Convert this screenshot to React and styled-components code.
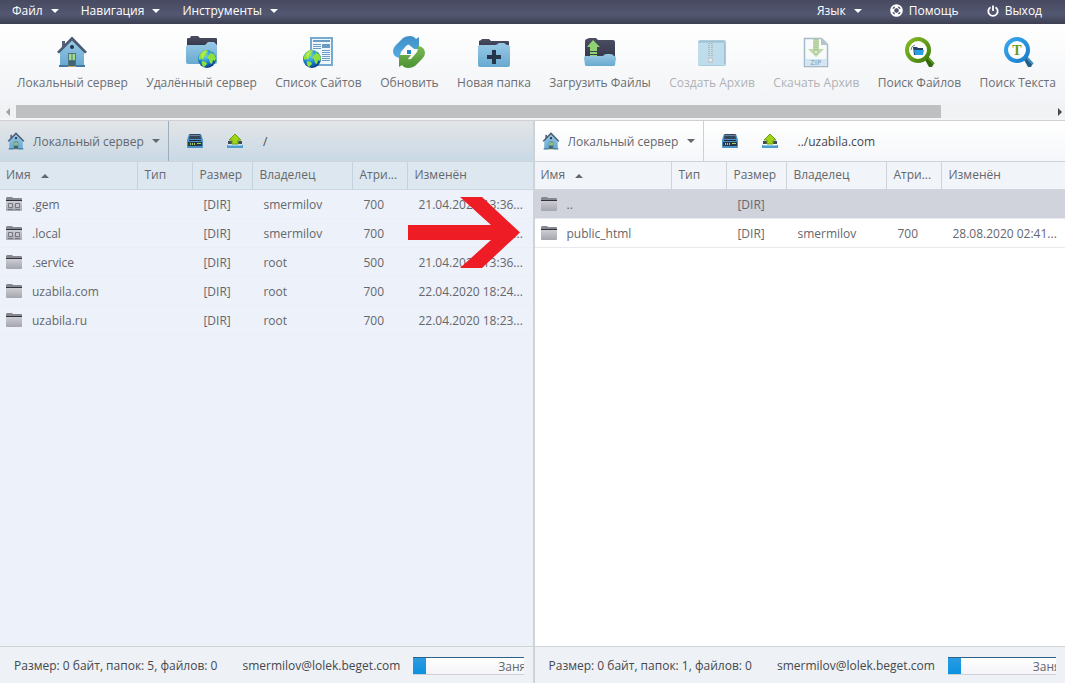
import styled, { createGlobalStyle } from "styled-components";

const menus = ["Файл", "Навигация", "Инструменты"];

const tools = [
  { label: "Локальный сервер", Icon: HomeIcon },
  { label: "Удалённый сервер", Icon: RemoteIcon },
  { label: "Список Сайтов", Icon: SitesIcon },
  { label: "Обновить", Icon: RefreshIcon },
  { label: "Новая папка", Icon: NewFolderIcon },
  { label: "Загрузить Файлы", Icon: UploadIcon },
  { label: "Создать Архив", Icon: ArchiveIcon, disabled: true },
  { label: "Скачать Архив", Icon: ZipIcon, disabled: true },
  { label: "Поиск Файлов", Icon: SearchFilesIcon },
  { label: "Поиск Текста", Icon: SearchTextIcon },
];

const columns = ["Имя", "Тип", "Размер", "Владелец", "Атрибуты", "Изменён"];

const leftFiles = [
  { name: ".gem", owner: "smermilov", attrs: "700", changed: "21.04.2020 13:36:12", hidden: true },
  { name: ".local", owner: "smermilov", attrs: "700", changed: "21.04.2020 13:36:12", hidden: true },
  { name: ".service", owner: "root", attrs: "500", changed: "21.04.2020 13:36:12" },
  { name: "uzabila.com", owner: "root", attrs: "700", changed: "22.04.2020 18:24:10" },
  { name: "uzabila.ru", owner: "root", attrs: "700", changed: "22.04.2020 18:23:10" },
];

const rightFiles = [
  { name: "..", owner: "", attrs: "", changed: "", selected: true },
  { name: "public_html", owner: "smermilov", attrs: "700", changed: "28.08.2020 02:41:10" },
];

export default function App() {
  return (
    <>
      <GlobalStyle />
      <Gradients />
      <Page>
        <MenuBar>
          <MenuGroup>
            {menus.map(menu => (
              <MenuButton key={menu} type="button">
                {menu}
                <Caret />
              </MenuButton>
            ))}
          </MenuGroup>
          <MenuGroup>
            <MenuButton type="button">
              Язык
              <Caret />
            </MenuButton>
            <MenuLink href="#help">
              <HelpIcon />
              Помощь
            </MenuLink>
            <MenuLink href="#logout">
              <PowerIcon />
              Выход
            </MenuLink>
          </MenuGroup>
        </MenuBar>
        <Toolbar>
          {tools.map(({ label, Icon, disabled }) => (
            <ToolButton key={label} type="button" disabled={disabled}>
              <Icon />
              {label}
            </ToolButton>
          ))}
        </Toolbar>
        <ScrollBar>
          <ScrollButton type="button" aria-label="Прокрутить влево" disabled>
            <svg width="4" height="8" viewBox="0 0 4 8">
              <path d="M4 0v8L0 4z" fill="#a0a0a0" />
            </svg>
          </ScrollButton>
          <ScrollTrack>
            <ScrollThumb />
          </ScrollTrack>
          <ScrollButton type="button" aria-label="Прокрутить вправо">
            <svg width="4" height="8" viewBox="0 0 4 8">
              <path d="M0 0v8l4-4z" fill="#484848" />
            </svg>
          </ScrollButton>
        </ScrollBar>
        <Panels>
          <FilePanel active id="left" path="/" files={leftFiles} summary="Размер: 0 байт, папок: 5, файлов: 0" />
          <FilePanel id="right" path="../uzabila.com" files={rightFiles} summary="Размер: 0 байт, папок: 1, файлов: 0" />
          <Pointer width="112" height="71" viewBox="0 0 112 71" aria-hidden="true">
            <path d="M52 0h22l38 35.500L74 71H52l31-28H0V28h83z" fill="#ee1c25" />
          </Pointer>
        </Panels>
      </Page>
    </>
  );
}

function FilePanel({ active, id, path, files, summary }) {
  return (
    <Panel $active={active}>
      <PathBar $active={active}>
        <ServerLabel htmlFor={`${id}-server`} $active={active}>
          <HomeIcon size={18} />
          <ServerSelect id={`${id}-server`} aria-label="Сервер">
            <option>Локальный сервер</option>
          </ServerSelect>
          <Caret />
        </ServerLabel>
        <PathButton type="button" aria-label="Диски">
          <DriveIcon />
        </PathButton>
        <PathButton type="button" aria-label="На уровень вверх">
          <LevelUpIcon />
        </PathButton>
        <PathInput aria-label="Путь" defaultValue={path} />
      </PathBar>
      <Files>
        <Table>
          <colgroup>
            <NameCol />
            <Col $width={55} />
            <Col $width={60} />
            <Col $width={100} />
            <Col $width={55} />
            <col />
          </colgroup>
          <thead>
            <tr>
              {columns.map((column, i) => (
                <HeadCell key={column} $active={active}>
                  {column === "Атрибуты" ? "Атри..." : column}
                  {i === 0 && <SortMark />}
                </HeadCell>
              ))}
            </tr>
          </thead>
          <tbody>
            {files.map(file => (
              <Row key={file.name} $selected={file.selected} $active={active}>
                <Cell>
                  <FileName>
                    <FolderIcon hidden={file.hidden} />
                    {file.name}
                  </FileName>
                </Cell>
                <Cell />
                <Cell>[DIR]</Cell>
                <Cell>{file.owner}</Cell>
                <Cell>{file.attrs}</Cell>
                <Cell>{file.changed && `${file.changed.slice(0, -3)}...`}</Cell>
              </Row>
            ))}
          </tbody>
        </Table>
      </Files>
      <StatusBar>
        <span>{summary}</span>
        <span>smermilov@lolek.beget.com</span>
        <Quota>
          <QuotaFill />
          <QuotaText>Заня</QuotaText>
        </Quota>
      </StatusBar>
    </Panel>
  );
}

function Caret() {
  return (
    <svg width="8" height="4" viewBox="0 0 8 4" aria-hidden="true">
      <path d="M0 0h8L4 4z" fill="currentColor" />
    </svg>
  );
}

function SortMark() {
  return (
    <SortSvg width="8" height="4" viewBox="0 0 8 4" aria-hidden="true">
      <path d="M0 4h8L4 0z" fill="currentColor" />
    </SortSvg>
  );
}

function Gradients() {
  return (
    <HiddenSvg width="0" height="0" aria-hidden="true">
      <linearGradient id="blue" x1="0" y1="0" x2="0" y2="1">
        <stop offset="0" stopColor="#99c9e6" />
        <stop offset="1" stopColor="#68a9d0" />
      </linearGradient>
      <linearGradient id="dark" x1="0" y1="0" x2="0" y2="1">
        <stop offset="0" stopColor="#4c4f63" />
        <stop offset="1" stopColor="#2f3244" />
      </linearGradient>
      <linearGradient id="grey" x1="0" y1="0" x2="0" y2="1">
        <stop offset="0" stopColor="#cdcdd3" />
        <stop offset="1" stopColor="#a4a5ae" />
      </linearGradient>
      <radialGradient id="ocean" cx="0.4" cy="0.3" r="0.7">
        <stop offset="0" stopColor="#6fd4fb" />
        <stop offset="0.6" stopColor="#1882d0" />
        <stop offset="1" stopColor="#0b3f88" />
      </radialGradient>
      <linearGradient id="arrowBlue" x1="0" y1="0" x2="0" y2="1">
        <stop offset="0" stopColor="#3f8fc6" />
        <stop offset="1" stopColor="#54ace0" />
      </linearGradient>
      <linearGradient id="arrowGreen" x1="0" y1="0" x2="0" y2="1">
        <stop offset="0" stopColor="#7bbb55" />
        <stop offset="1" stopColor="#4b9232" />
      </linearGradient>
      <linearGradient id="ringGreen" x1="0" y1="0" x2="1" y2="1">
        <stop offset="0" stopColor="#86bc26" />
        <stop offset="1" stopColor="#3f7d0c" />
      </linearGradient>
      <linearGradient id="ringBlue" x1="0" y1="0" x2="1" y2="1">
        <stop offset="0" stopColor="#38a8ee" />
        <stop offset="1" stopColor="#1a7dcc" />
      </linearGradient>
    </HiddenSvg>
  );
}

function HomeIcon({ size = 32 }) {
  return (
    <svg width={size} height={size} viewBox="0 0 32 32" aria-hidden="true">
      <path d="M6 5h3v8H6z" fill="#56657a" />
      <path d="M4 14 16 3l12 11v16H4z" fill="url(#blue)" />
      <path d="M1 16 16 0.500 31 16l-2 1.500L16 4.500 3 17.500z" fill="#4b5a73" />
      <circle cx="16" cy="11" r="2" fill="#25364c" />
      <path d="M12 17h8v13h-8z" fill="#4d7482" />
      <path d="M13 18h2.500v6H13zM16.500 18H19v6h-2.500z" fill="#a4dc84" />
      <path d="M13 25h6v5h-6z" fill="#426371" />
      <path d="M3 29h9v2H3zM20 29h9v2h-9z" fill="#437ba0" />
      <path d="M12 30h8v1h-8z" fill="#bda66d" />
    </svg>
  );
}

function Globe({ x, y }) {
  return (
    <g transform={`translate(${x} ${y})`}>
      <circle cx="9" cy="9" r="9" fill="url(#ocean)" />
      <path
        d="M2 4Q5 0 9 0l1 2-2 1 1 2-3 2-1 3-2-1-2 1Q0 7 2 4zM10 6l3-3 3 1 2 4-1 3-2-1-1 4-2-1-1-4-2-1zM4 11l4 1 1 2-3 3q-3-2-2-6zM12 1l2 1-1 1z"
        fill="#8ee03c"
      />
      <path d="M3 5q2-4 6-4l-3 4-1 4z" fill="#bdf15c" opacity="0.8" />
    </g>
  );
}

function RemoteIcon() {
  return (
    <svg width="34" height="32" viewBox="0 0 34 32" aria-hidden="true">
      <path d="M2 12V3q0-1 1-1h2l1-2h7l2 2h16q1 0 1 1v9z" fill="url(#dark)" />
      <path d="M1 11q0-2 2-2h17l3-3h6l3 3v17q0 2-2 2H3q-2 0-2-2z" fill="url(#blue)" />
      <Globe x={13} y={14} />
    </svg>
  );
}

function SitesIcon() {
  return (
    <svg width="32" height="32" viewBox="0 0 32 32" aria-hidden="true">
      <path d="M8 1h23v29H8z" fill="#76a9d0" />
      <path d="M10 3h19v25H10z" fill="#edf7fc" />
      <path
        d="M11 4h17v2H11zM11 8h8v1h-8zM11 10h8v1h-8zM11 12h8v1h-8zM20 8h8v4h-8zM20 14h8v1h-8zM20 16h8v1h-8zM20 18h8v1h-8zM20 20h8v1h-8zM20 22h8v1h-8zM20 24h8v1h-8z"
        fill="#6c9cc6"
      />
      <Globe x={1} y={14} />
    </svg>
  );
}

function RefreshIcon() {
  return (
    <svg width="32" height="32" viewBox="0 0 32 32" aria-hidden="true">
      <path
        d="M7 22Q0 21 0 15q0-3 3-6l7-7q3-2 7-2 4 0 6 3l3-2v12H14l3-4q-2-1-4 1l-5 6q-1 2-1 6z"
        fill="url(#arrowBlue)"
      />
      <path
        d="M25 10q7 1 7 7 0 3-3 6l-7 7q-3 2-7 2-4 0-6-3l-3 2V19h12l-3 4q2 1 4-1l5-6q1-2 1-6z"
        fill="url(#arrowGreen)"
      />
      <path d="M16 9l8 6-5 4h-8l-3-3z" fill="#fcfdfe" />
      <path d="M14 14h4v4h-4z" fill="#2585c8" />
    </svg>
  );
}

function NewFolderIcon() {
  return (
    <svg width="32" height="32" viewBox="0 0 32 32" aria-hidden="true">
      <path d="M1 14V5l2-1 1-1h7l2 2h17q1 0 1 1v8z" fill="url(#dark)" />
      <path d="M0 11q0-2 2-2h16l3-2h5l3 2h1q2 0 2 2v18q0 2-2 2H2q-2 0-2-2z" fill="url(#blue)" />
      <path d="M14 14h4v5h5v4h-5v5h-4v-5H9v-4h5z" fill="#25354a" />
    </svg>
  );
}

function UploadIcon() {
  return (
    <svg width="32" height="32" viewBox="0 0 32 32" aria-hidden="true">
      <path d="M1 27V5q0-2 2-2l2-1h7l2 2h15q2 0 2 2v21z" fill="url(#dark)" />
      <path d="M9 4 16 11h-3v4H6v-4H3z" fill="#91d274" />
      <path d="M6 16h7v2H6zM6 19h7v1H6z" fill="#91d274" />
      <path d="M0 22q0-2 2-2h17q1-2 4-2h3q3 0 4 2 2 0 2 2l-1 7q0 1-2 1H3q-2 0-2-1z" fill="url(#blue)" />
    </svg>
  );
}

function ArchiveIcon() {
  return (
    <svg width="28" height="32" viewBox="0 0 28 32" aria-hidden="true">
      <rect y="4" width="28" height="26" rx="2" fill="#5ba2c4" />
      <path d="M0 7h27v21q0 1-1 1H2q-2 0-2-1z" fill="#85c0dc" />
      <path d="M1 5h25v1H1zM26 7h1v21h-1z" fill="#4885ad" />
      <path d="M11 5v17M14 5v17" stroke="#667b86" strokeWidth="2" strokeDasharray="1 1" />
      <path d="M10 21h5v6h-5z" fill="#849ba6" />
      <circle cx="12.500" cy="24" r="1.500" fill="#dde6ed" />
    </svg>
  );
}

function ZipIcon() {
  return (
    <svg width="26" height="32" viewBox="0 0 26 32" aria-hidden="true">
      <path d="M1.500 2.500h17l6 6v22h-23z" fill="#f7fafc" stroke="#547c96" strokeWidth="1.500" />
      <path d="M18 2v7h7z" fill="#718b9c" />
      <path d="M10 3h6v10h5l-8 8-8-8h5z" fill="#83bd4e" />
      <path d="M12 3v12M14 3v12" stroke="#536a53" strokeDasharray="1 1" />
      <circle cx="13" cy="16" r="2" fill="#d4e8bd" stroke="#5e8150" />
      <path d="M2 23h22v7H2z" fill="#add5ed" />
      <ZipGlyph x="13" y="29" textAnchor="middle">ZIP</ZipGlyph>
    </svg>
  );
}

function SearchFilesIcon() {
  return (
    <svg width="32" height="32" viewBox="0 0 32 32" aria-hidden="true">
      <path d="M21 22l3-3 7 8-2 4h-3z" fill="#36660d" />
      <path d="M25 22l6 6" stroke="#589622" strokeWidth="2" />
      <circle cx="15" cy="14" r="11" fill="#fff" stroke="url(#ringGreen)" strokeWidth="4" />
      <path d="M10 11h4l1 1h5v7h-9z" fill="#25445f" />
      <path d="M11 14h10l-1 5h-8z" fill="#289fe6" />
      <path d="M8 14q0-4 4-5" fill="none" stroke="#72848d" />
    </svg>
  );
}

function SearchTextIcon() {
  return (
    <svg width="32" height="32" viewBox="0 0 32 32" aria-hidden="true">
      <path d="M21 22l3-3 7 8-2 4h-3z" fill="#255e86" />
      <path d="M25 22l6 6" stroke="#4794c2" strokeWidth="2" />
      <circle cx="15" cy="14" r="11" fill="#fff" stroke="url(#ringBlue)" strokeWidth="4" />
      <TextGlyph x="15" y="19" textAnchor="middle">T</TextGlyph>
    </svg>
  );
}

function HelpIcon() {
  return (
    <svg width="13" height="13" viewBox="0 0 13 13" aria-hidden="true">
      <circle cx="6.500" cy="6.500" r="5.500" fill="none" stroke="#fff" strokeWidth="1.600" />
      <circle cx="6.500" cy="6.500" r="2.800" fill="none" stroke="#fff" />
      <path d="M4 1h5l-1 3H5zM5 9h3l1 3H4zM1 4l3 1v3L1 9zM12 4v5L9 8V5z" fill="#fff" />
    </svg>
  );
}

function PowerIcon() {
  return (
    <svg width="12" height="12" viewBox="0 0 12 12" aria-hidden="true" fill="none" stroke="#fff" strokeWidth="1.800">
      <path d="M3.500 2.200a4.700 4.700 0 1 0 5 0M6 0.500v5.500" />
    </svg>
  );
}

function DriveIcon() {
  return (
    <svg width="16" height="14" viewBox="0 0 16 14" aria-hidden="true">
      <path d="M2 0h12l2 6v7q0 1-1 1H1q-1 0-1-1V6z" fill="#4b91c5" />
      <path d="M3 0h10l1 5H2z" fill="#35465b" />
      <path d="M3 1h10v1H3z" fill="#6b849c" />
      <path d="M2 6h12v1H2z" fill="#1c2a3a" />
      <path d="M1 8h14v4H1z" fill="#273747" />
      <path d="M3 9h1v2H3zM5 9h1v2H5zM7 9h1v2H7zM10 9h4v1h-4z" fill="#9fd25c" />
    </svg>
  );
}

function LevelUpIcon() {
  return (
    <svg width="16" height="16" viewBox="0 0 16 16" aria-hidden="true">
      <path d="M1 8h14v3H1z" fill="#454b57" />
      <path d="M8 1 14 7h-3v4H5V7H2z" fill="#9dd514" stroke="#6c9f1c" />
      <path d="M0 12h16v3H0z" fill="#4e9dce" />
      <path d="M1 12h14v1H1z" fill="#8bc9e9" />
    </svg>
  );
}

function FolderIcon({ hidden }) {
  return (
    <svg width="16" height="14" viewBox="0 0 16 14" aria-hidden="true">
      <path d="M0 3V1l1-1h5l1 1h8q1 0 1 1v2H0z" fill="#85888f" />
      <path d="M0 3h16v1H0z" fill="#30333b" />
      <path d="M0 4h16v9q0 1-1 1H1q-1 0-1-1z" fill="url(#grey)" />
      {hidden && (
        <path d="M2.500 6.500h4v4h-4zM9.500 6.500h4v4h-4zM2 12.500h5M9 12.500h5" fill="#c6c7cc" stroke="#74777f" />
      )}
    </svg>
  );
}

const GlobalStyle = createGlobalStyle`
  * {
    box-sizing: border-box;
  }
  body {
    margin: 0;
    font-family: "Open Sans", "Noto Sans", sans-serif;
    font-size: 12px;
    color: #64676c;
  }
  button, input, select {
    font: inherit;
    color: inherit;
    border: 0;
    padding: 0;
    background: none;
  }
  svg {
    flex: none;
  }
`;

const Page = styled.div`
  display: flex;
  flex-direction: column;
  height: 100vh;
  overflow: hidden;
  background-color: #f4f5f7;
`;

const HiddenSvg = styled.svg`
  position: absolute;
`;

const MenuBar = styled.nav`
  display: flex;
  justify-content: space-between;
  height: 24px;
  padding: 0 12px;
  background: linear-gradient(#474a60, #535771 60%, #3d4052);
  color: #ffffff;
`;

const MenuGroup = styled.div`
  display: flex;
  align-items: center;
  gap: 22px;
  height: 21px;

  & + & {
    gap: 28px;
    padding-right: 11px;
  }
`;

const MenuButton = styled.button`
  display: flex;
  align-items: center;
  gap: 8px;
`;

const MenuLink = styled.a`
  display: flex;
  align-items: center;
  gap: 6px;
  color: inherit;
  text-decoration: none;
`;

const Toolbar = styled.div`
  display: flex;
  flex: none;
  justify-content: space-between;
  height: 81px;
  padding-left: 8px;
  overflow: hidden;
  background: linear-gradient(#ffffff, #f1f3f6);
`;

const ToolButton = styled.button`
  display: flex;
  flex: none;
  flex-direction: column;
  align-items: center;
  gap: 6px;
  padding: 12px 9px 0;
  line-height: 18px;
  white-space: nowrap;
  color: #6b6e73;

  &:disabled {
    opacity: 0.5;
  }
`;

const TextGlyph = styled.text`
  font-family: "Liberation Serif", serif;
  font-size: 14px;
  font-weight: 700;
  fill: #5f9c20;
`;

const ZipGlyph = styled.text`
  font-size: 7px;
  font-weight: 700;
  fill: #426983;
`;

const ScrollBar = styled.div`
  display: flex;
  flex: none;
  height: 13px;
  background-color: #f1f2f4;
`;

const ScrollButton = styled.button`
  display: flex;
  flex: none;
  align-items: center;
  justify-content: center;
  width: 16px;

  &:last-child {
    width: 10px;
  }
`;

const ScrollTrack = styled.div`
  flex: 1;
`;

const ScrollThumb = styled.div`
  width: 89%;
  height: 100%;
  background-color: #bfc0c2;
`;

const Panels = styled.main`
  position: relative;
  display: flex;
  flex: 1;
  min-height: 0;
  margin-top: 2px;
  border-top: 1px solid #ced0d3;
`;

const Panel = styled.section`
  display: flex;
  flex: 1;
  flex-direction: column;
  min-width: 0;
  background-color: ${({ $active }) => ($active ? "#edf1f9" : "#ffffff")};

  &:first-child {
    flex: none;
    width: calc(50% + 2px);
    border-right: 2px solid #cfd2d6;
  }
`;

const PathBar = styled.div`
  display: flex;
  flex: none;
  align-items: center;
  height: 41px;
  border-bottom: 1px solid #cdd3d9;
  background: ${({ $active }) =>
    $active ? "linear-gradient(#e2e5e7, #c9d9e6)" : "linear-gradient(#ffffff, #f5f7fa)"};
`;

const ServerLabel = styled.label`
  display: flex;
  align-items: center;
  align-self: stretch;
  gap: 8px;
  padding: 0 8px 0 7px;
  margin-right: 6px;
  border-right: 1px solid ${({ $active }) => ($active ? "#9dadb9" : "#cdd0d4")};
`;

const ServerSelect = styled.select`
  appearance: none;
  outline: 0;
`;

const PathButton = styled.button`
  display: flex;
  align-items: center;
  justify-content: center;
  width: 40px;
  height: 32px;
`;

const PathInput = styled.input`
  flex: 1;
  min-width: 0;
  padding: 0 8px;
  outline: 0;
  color: #45484d;
`;

const Files = styled.div`
  flex: 1;
  min-height: 0;
  overflow: hidden;
`;

const Table = styled.table`
  width: 100%;
  table-layout: fixed;
  border-collapse: separate;
  border-spacing: 0;
`;

const NameCol = styled.col`
  width: 26%;
`;

const Col = styled.col`
  width: ${({ $width }) => $width}px;
`;

const HeadCell = styled.th`
  height: 28px;
  padding: 0 6px 2px;
  border-right: 1px solid ${({ $active }) => ($active ? "#c3d2de" : "#d0d3d7")};
  border-bottom: 1px solid ${({ $active }) => ($active ? "#cbd8e3" : "#d0d3d7")};
  background-color: ${({ $active }) => ($active ? "#dde7f0" : "#f1f4f8")};
  font-weight: 400;
  text-align: left;
  white-space: nowrap;
  overflow: hidden;

  &:last-child {
    border-right: 0;
  }
`;

const SortSvg = styled.svg`
  margin-left: 10px;
  vertical-align: middle;
`;

const Cell = styled.td`
  height: 29px;
  padding: 0 10px;
  border-bottom: 1px solid;
  border-color: inherit;
  white-space: nowrap;

  &:first-child {
    padding: 0 6px;
  }
`;

const Row = styled.tr`
  background-color: ${({ $selected }) => ($selected ? "#d0d3dc" : "transparent")};
  border-color: ${({ $active }) => ($active ? "#ebeef5" : "#e8eaed")};
`;

const FileName = styled.div`
  display: flex;
  align-items: center;
  gap: 10px;
`;

const StatusBar = styled.footer`
  display: flex;
  flex: none;
  align-items: center;
  gap: 25px;
  height: 37px;
  padding: 1px 9px 0 14px;
  border-top: 1px solid #d0d3d5;
  background-color: #eef1f5;
  color: #45484d;
  white-space: nowrap;
`;

const Quota = styled.div`
  display: flex;
  flex: 1;
  min-width: 0;
  height: 18px;
  margin-left: -12px;
  overflow: hidden;
  border-top: 1px solid #2a6387;
  border-bottom: 1px solid #cfd1d4;
  background: linear-gradient(#ffffff, #f4f4fa);
`;

const QuotaFill = styled.div`
  flex: none;
  width: 13px;
  background: linear-gradient(#2b9be0, #0b93e2);
`;

const QuotaText = styled.span`
  margin-left: 72px;
  color: #64676c;
`;

const Pointer = styled.svg`
  position: absolute;
  top: 76px;
  left: 408px;
`;
